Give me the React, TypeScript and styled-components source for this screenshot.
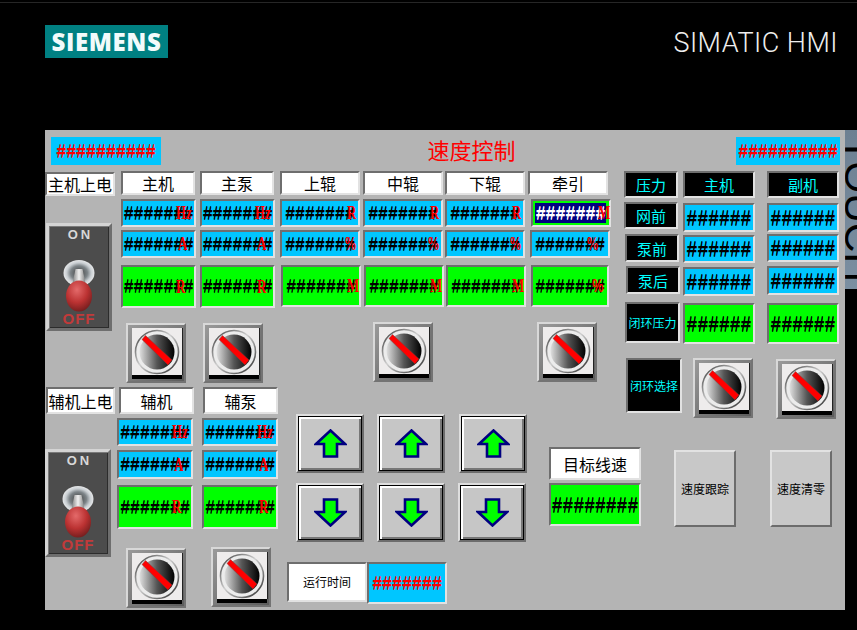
import React, { FC } from "react";
import styled, { createGlobalStyle } from "styled-components";

const Global = createGlobalStyle`
  html, body { margin: 0; padding: 0; background: #000; }
  body { width: 857px; height: 630px; overflow: hidden; }
  * { box-sizing: border-box; }
`;

const CJK = `"Noto Sans CJK SC", "Liberation Sans", sans-serif`;
const HASH = `"Liberation Mono", monospace`;

const Screen = styled.div`
  width: 857px;
  height: 630px;
  background: #000;
  border-top: 2px solid #000;
  box-shadow: inset 0 1px 0 #262626;
  overflow: hidden;
`;

const Header = styled.header`
  display: flex;
  justify-content: space-between;
  align-items: flex-start;
  height: 128px;
  padding: 23px 19px 0 45px;
`;

const Logo = styled.div`
  width: 123px;
  height: 33px;
  background: #008082;
  color: #f2fbfb;
  font: 800 24px/33px "Open Sans", sans-serif;
  letter-spacing: 0.6px;
  text-align: center;
`;

const Product = styled.div`
  color: #eee;
  font: 300 27px/34px Roboto, sans-serif;
  margin-top: 1px;
  letter-spacing: 0.5px;
`;

const Stage = styled.div`
  display: flex;
  height: 480px;
  padding-left: 45px;
`;

const Panel = styled.main`
  width: 800px;
  height: 480px;
  background: #b4b4b4;
  display: flex;
  flex-direction: column;
`;

const Strip = styled.aside`
  width: 12px;
  height: 159px;
  background: linear-gradient(#6d8092, #7b8fa1);
  overflow: hidden;
  position: relative;
`;

const StripText = styled.span`
  position: absolute;
  top: 7px;
  left: -7px;
  writing-mode: vertical-rl;
  color: #000;
  font: 400 41px/41px "Liberation Sans", sans-serif;
`;

const TopBar = styled.div`
  display: flex;
  justify-content: space-between;
  align-items: center;
  height: 41px;
  padding: 7px 5px 6px 6px;
`;

const Title = styled.h1`
  margin: 0 0 4px 46px;
  color: #f00;
  font: 400 22px/28px ${CJK};
`;

const Body = styled.div`
  display: flex;
  flex: 1;
`;

const Col = styled.div<{ $w?: number; $gap?: number; $dx?: number; $dy?: number }>`
  display: flex;
  flex-direction: column;
  gap: ${(p) => p.$gap ?? 0}px;
  ${(p) => (p.$w ? `width: ${p.$w}px; flex: none;` : "")}
  margin-left: ${(p) => p.$dx ?? 0}px;
  margin-top: ${(p) => p.$dy ?? 0}px;
`;

const Row = styled.div<{ $gap?: number; $h?: number; $dx?: number; $dy?: number }>`
  display: flex;
  gap: ${(p) => p.$gap ?? 0}px;
  ${(p) => (p.$h ? `height: ${p.$h}px; flex: none;` : "")}
  margin-left: ${(p) => p.$dx ?? 0}px;
  margin-top: ${(p) => p.$dy ?? 0}px;
`;

const Flat = styled.div<{ $w: number }>`
  width: ${(p) => p.$w}px;
  height: 28px;
  background: #00c6ff;
  display: flex;
  align-items: center;
  justify-content: center;
`;

const Sunken = styled.div<{ $w: number; $h: number; $bg: string; $dx?: number; $dy?: number }>`
  position: relative;
  flex: none;
  width: ${(p) => p.$w}px;
  height: ${(p) => p.$h}px;
  margin-left: ${(p) => p.$dx ?? 0}px;
  margin-top: ${(p) => p.$dy ?? 0}px;
  background: ${(p) => p.$bg};
  border: 2px solid;
  border-color: #6e6e6e #e2e2e2 #e2e2e2 #6e6e6e;
  display: flex;
  align-items: center;
  justify-content: center;
  white-space: nowrap;
  overflow: hidden;
`;

const Label = styled(Sunken)<{ $size?: number; $color?: string }>`
  color: ${(p) => p.$color ?? "#000"};
  font: 400 ${(p) => p.$size ?? 16}px/1 ${CJK};
`;

// the HMI's "no value" marks: thin uprights, heavy bars
const Hashes = styled.span<{ $color?: string; $size?: number }>`
  display: inline-block;
  transform: translateY(1px) scaleY(1.2);
  color: ${(p) => p.$color ?? "#000"};
  font: 400 ${(p) => p.$size ?? 16.6}px/1 ${HASH};
  text-shadow: 0 1px 0 ${(p) => p.$color ?? "#000"};
`;

const Unit = styled.span<{ $at: number; $size?: number; $sans?: boolean }>`
  position: absolute;
  top: 50%;
  left: ${(p) => p.$at}px;
  transform: translateY(-50%) scaleX(0.72);
  transform-origin: left center;
  color: #f00;
  font: 700 ${(p) => p.$size ?? 18}px/1 ${(p) => (p.$sans ? `"Liberation Sans", sans-serif` : `"Liberation Serif", serif`)};
`;

type ReadoutProps = {
  w: number;
  h: number;
  bg: string;
  count?: number;
  unit?: string;
  at?: number;
  dx?: number;
  dy?: number;
  color?: string;
  sans?: boolean;
  size?: number;
};

const Readout: FC<ReadoutProps> = ({ w, h, bg, count = 7, unit, at = 0, dx, dy, color, sans, size }) => (
  <Sunken $w={w} $h={h} $bg={bg} $dx={dx} $dy={dy}>
    <Hashes $color={color} $size={size}>{"#".repeat(count)}</Hashes>
    {unit && <Unit $at={at} $sans={sans}>{unit}</Unit>}
  </Sunken>
);

const BLUE = "#00c6ff";
const GREEN = "#00ff00";

const Selected = styled.div`
  position: relative;
  width: 80px;
  height: 28px;
  margin-left: 3px;
  border: 2px solid;
  border-color: #6e6e6e #e2e2e2 #e2e2e2 #6e6e6e;
  background: #00ff00;
  padding: 2px;
  flex: none;
`;

const SelectedInner = styled.div`
  width: 71px;
  height: 20px;
  background: #000080;
  display: flex;
  align-items: center;
  justify-content: center;
  overflow: visible;
`;

const KnobFrame = styled.div<{ $dx?: number; $dy?: number }>`
  flex: none;
  width: 60px;
  height: 60px;
  margin-left: ${(p) => p.$dx ?? 0}px;
  margin-top: ${(p) => p.$dy ?? 0}px;
  border: 2px solid;
  border-color: #d8d8d8 #737373 #737373 #d8d8d8;
  background: linear-gradient(135deg, #9a9a9a, #5c5c5c);
  padding: 3px 2px 6px 4px;
  display: flex;
`;

const KnobFace = styled.div`
  flex: 1;
  background: #eeecec;
  box-shadow: 0 4px 0 #000, 1px 0 0 #222;
  display: flex;
  align-items: center;
  justify-content: center;
`;

const Knob: FC<{ dx?: number; dy?: number }> = ({ dx, dy }) => (
  <KnobFrame $dx={dx} $dy={dy}>
    <KnobFace>
      <svg width="46" height="46" viewBox="0 0 46 46">
        <defs>
          <linearGradient id="knobRing" x1="0" y1="0" x2="1" y2="1">
            <stop offset="0" stopColor="#333" />
            <stop offset="0.45" stopColor="#d0d0d0" />
            <stop offset="1" stopColor="#222" />
          </linearGradient>
          <linearGradient id="knobCap" x1="0" y1="0" x2="1" y2="0">
            <stop offset="0" stopColor="#e0e0e0" />
            <stop offset="0.5" stopColor="#555" />
            <stop offset="1" stopColor="#000" />
          </linearGradient>
        </defs>
        <circle cx="23" cy="23" r="21.5" fill="#ececec" stroke="url(#knobRing)" strokeWidth="1.6" />
        <circle cx="23" cy="23" r="17.5" fill="url(#knobCap)" />
        <path d="M8 10.5 L11.5 6.5 L38 31 L34 36 Z" fill="#f00" stroke="#7c3a3a" strokeWidth="0.5" />
      </svg>
    </KnobFace>
  </KnobFrame>
);

const Plate = styled.div<{ $dx?: number; $dy?: number }>`
  flex: none;
  width: 66px;
  height: 108px;
  margin-left: ${(p) => p.$dx ?? 0}px;
  margin-top: ${(p) => p.$dy ?? 0}px;
  background: #4c4c4c;
  border: 3px solid;
  border-color: #d4d4d4 #6e6e6e #6e6e6e #d4d4d4;
  box-shadow: inset 1px 1px 0 #7a7a7a, inset -1px -1px 0 #2c2c2c;
  display: flex;
  flex-direction: column;
  align-items: center;
`;

const PlateOn = styled.span`
  color: #d8d8d8;
  font: 700 13px/16px "Liberation Sans", sans-serif;
  letter-spacing: 3px;
  margin: 1px 0 0 3px;
`;

const PlateOff = styled.span`
  color: #c23a3a;
  font: 900 15px/14px "Liberation Sans", sans-serif;
  letter-spacing: 1px;
  margin-top: 0;
`;

const ToggleArt = styled.svg`
  margin-top: 17px;
`;

const Toggle: FC<{ dx?: number; dy?: number }> = ({ dx, dy }) => (
  <Plate $dx={dx} $dy={dy}>
    <PlateOn>ON</PlateOn>
    <ToggleArt width="32" height="52" viewBox="0 0 32 52">
      <defs>
        <radialGradient id="toggleCollar" cx="0.5" cy="0.5" r="0.55">
          <stop offset="0" stopColor="#3c3c3c" />
          <stop offset="0.5" stopColor="#7d8488" />
          <stop offset="0.72" stopColor="#c9ced2" />
          <stop offset="1" stopColor="#f4f4f4" />
        </radialGradient>
        <radialGradient id="toggleBall" cx="0.42" cy="0.3" r="0.75">
          <stop offset="0" stopColor="#e46a6a" />
          <stop offset="0.55" stopColor="#bb3232" />
          <stop offset="1" stopColor="#6e1c1c" />
        </radialGradient>
        <linearGradient id="toggleStem" x1="0" y1="0" x2="1" y2="0">
          <stop offset="0" stopColor="#777" />
          <stop offset="0.5" stopColor="#f0f0f0" />
          <stop offset="1" stopColor="#777" />
        </linearGradient>
      </defs>
      <ellipse cx="16" cy="13" rx="15.5" ry="13" fill="url(#toggleCollar)" />
      <path d="M12.5 9 H19.5 L23 26 H9 Z" fill="url(#toggleStem)" />
      <ellipse cx="16" cy="36" rx="13" ry="15.5" fill="url(#toggleBall)" />
    </ToggleArt>
    <PlateOff>OFF</PlateOff>
  </Plate>
);

const ArrowButton = styled.button<{ $dx?: number }>`
  flex: none;
  width: 68px;
  height: 59px;
  padding: 0;
  margin-left: ${(p) => p.$dx ?? 0}px;
  background: #c6c6c6;
  border: 2px solid;
  border-color: #dedede #6c6c6c #6c6c6c #dedede;
  box-shadow: inset 0 0 0 1px #000, inset 2px 2px 0 1px #fff, inset -2px -2px 0 1px #777;
  display: flex;
  align-items: center;
  justify-content: center;
`;

const Arrow: FC<{ down?: boolean }> = ({ down }) => (
  <svg width="33" height="29" viewBox="0 0 33 29">
    <path
      d={down ? "M10 1.5 H23 V14 H31 L16.5 27.5 L2 14 H10 Z" : "M16.5 1.5 L31 15 H23 V27.5 H10 V15 H2 Z"}
      fill="#00ff00"
      stroke="#000080"
      strokeWidth="2.6"
    />
  </svg>
);

const PushButton = styled.button<{ $dx?: number }>`
  flex: none;
  width: 62px;
  height: 77px;
  padding: 0;
  margin: 36px 0 0 ${(p) => p.$dx ?? 0}px;
  background: #c8c8c8;
  border: 2px solid;
  border-color: #e2e2e2 #6c6c6c #6c6c6c #e2e2e2;
  color: #000;
  font: 400 12px/1 ${CJK};
`;

type DriveProps = {
  name: string;
  w: number;
  dx: number;
  nameDx?: number;
  gaps: number[];
  hs: number[];
  shift?: number;
};

const Drive: FC<DriveProps> = ({ name, w, dx, nameDx = 0, gaps, hs, shift = 0 }) => (
  <Col $w={w + 4} $dx={dx}>
    <Label $w={w} $h={hs[0]} $bg="#fff" $dx={nameDx}>{name}</Label>
    <Readout w={w + 1} h={hs[1]} bg={BLUE} dy={gaps[0]} unit="Hz" at={53} />
    <Readout w={w + 1} h={hs[2]} bg={BLUE} dy={gaps[1]} unit="A" at={55} />
    <Readout w={w + 1} h={hs[3]} bg={GREEN} dy={gaps[2]} unit="R" at={53 + shift} />
  </Col>
);

const Roll: FC<{ name: string; dx: number; lift?: number }> = ({ name, dx, lift = 1 }) => (
  <Col $w={82} $dx={dx}>
    <Label $w={80} $h={24} $bg="#fff">{name}</Label>
    <Readout w={80} h={28} bg={BLUE} dy={4} unit="R" at={65} />
    <Readout w={80} h={28} bg={BLUE} dy={3} unit="%" at={62} />
    <Readout w={80} h={42} bg={GREEN} dy={7} dx={lift} unit="M" at={64} />
  </Col>
);

const Tract: FC<{ dx: number }> = ({ dx }) => (
  <Col $w={82} $dx={dx}>
    <Label $w={80} $h={24} $bg="#fff">牵引</Label>
    <Row $dy={4}>
      <Selected>
        <SelectedInner>
          <Hashes $color="#fff">#######</Hashes>
        </SelectedInner>
        <Unit $at={65}>M</Unit>
      </Selected>
    </Row>
    <Readout w={80} h={28} bg={BLUE} dx={2} dy={3} unit="%" at={54} />
    <Readout w={78} h={42} bg={GREEN} dx={3} dy={7} unit="%" at={59} sans />
  </Col>
);

type CyanProps = { w: number; h: number; size?: number; dx?: number; dy?: number; children: React.ReactNode };

const Cyan: FC<CyanProps> = ({ w, h, size = 15, dx, dy, children }) => (
  <Label $w={w} $h={h} $bg="#000" $color="#00ffff" $size={size} $dx={dx} $dy={dy}>
    {children}
  </Label>
);

const App: FC = () => (
  <>
    <Global />
    <Screen>
      <Header>
        <Logo>SIEMENS</Logo>
        <Product>SIMATIC HMI</Product>
      </Header>
      <Stage>
        <Panel>
          <TopBar>
            <Flat $w={110}><Hashes $color="#f00">##########</Hashes></Flat>
            <Title>速度控制</Title>
            <Flat $w={104}><Hashes $color="#f00">##########</Hashes></Flat>
          </TopBar>
          <Body>
            <Col $w={235}>
              <Row $h={216}>
                <Col $w={76}>
                  <Label $w={70} $h={24} $bg="#fff" $dy={1}>主机上电</Label>
                  <Toggle dx={1} dy={27} />
                </Col>
                <Col>
                  <Row>
                    <Drive name="主机" w={74} dx={0} gaps={[4, 3, 7]} hs={[24, 28, 28, 43]} />
                    <Drive name="主泵" w={74} dx={1} gaps={[4, 3, 7]} hs={[24, 28, 28, 43]} shift={2} />
                  </Row>
                  <Row $dy={15} $dx={5}>
                    <Knob />
                    <Knob dx={17} />
                  </Row>
                </Col>
              </Row>
              <Row>
                <Col $w={72}>
                  <Label $w={69} $h={27} $bg="#fff" $dx={1}>辅机上电</Label>
                  <Toggle dy={35} />
                </Col>
                <Col>
                  <Row>
                    <Drive name="辅机" w={75} dx={0} nameDx={2} gaps={[4, 4, 6]} hs={[27, 28, 29, 44]} />
                    <Drive name="辅泵" w={75} dx={6} nameDx={1} gaps={[4, 4, 6]} hs={[27, 28, 29, 44]} shift={2} />
                  </Row>
                  <Row $dy={19} $dx={9}>
                    <Knob />
                    <Knob dx={25} dy={-1} />
                  </Row>
                </Col>
              </Row>
            </Col>
            <Col>
              <Row $h={243}>
                <Col $w={330}>
                  <Row>
                    <Roll name="上辊" dx={0} />
                    <Roll name="中辊" dx={1} />
                    <Roll name="下辊" dx={0} />
                    <Tract dx={1} />
                  </Row>
                  <Row $dy={15} $dx={93}>
                    <Knob />
                    <Knob dx={104} />
                  </Row>
                </Col>
                <Col $w={60} $dx={14}>
                  <Cyan w={54} h={27}>压力</Cyan>
                  <Cyan w={54} h={27} dy={4}>网前</Cyan>
                  <Cyan w={54} h={28} dx={1} dy={5}>泵前</Cyan>
                  <Cyan w={54} h={28} dx={2} dy={4}>泵后</Cyan>
                  <Cyan w={55} h={41} size={12} dx={1} dy={8}>闭环压力</Cyan>
                  <Cyan w={56} h={55} size={12} dx={2} dy={15}>闭环选择</Cyan>
                </Col>
                <Col $w={84} $dx={-1}>
                  <Cyan w={72} h={27}>主机</Cyan>
                  <Readout w={72} h={29} bg={BLUE} count={6} size={18} dy={5} />
                  <Readout w={72} h={28} bg={BLUE} count={6} size={18} dy={3} />
                  <Readout w={72} h={29} bg={BLUE} count={6} size={18} dy={4} />
                  <Readout w={72} h={41} bg={GREEN} count={6} size={18} dy={7} />
                  <Knob dx={10} dy={14} />
                </Col>
                <Col $w={72}>
                  <Cyan w={72} h={27}>副机</Cyan>
                  <Readout w={72} h={29} bg={BLUE} count={6} size={18} dy={5} />
                  <Readout w={72} h={28} bg={BLUE} count={6} size={18} dy={2} />
                  <Readout w={72} h={29} bg={BLUE} count={6} size={18} dy={4} />
                  <Readout w={72} h={41} bg={GREEN} count={6} size={18} dy={8} />
                  <Knob dx={9} dy={15} />
                </Col>
              </Row>
              <Row>
                <Col $w={253}>
                  <Row $dx={16}>
                    <ArrowButton><Arrow /></ArrowButton>
                    <ArrowButton $dx={13}><Arrow /></ArrowButton>
                    <ArrowButton $dx={14}><Arrow /></ArrowButton>
                  </Row>
                  <Row $dx={16} $dy={10}>
                    <ArrowButton><Arrow down /></ArrowButton>
                    <ArrowButton $dx={13}><Arrow down /></ArrowButton>
                    <ArrowButton $dx={13}><Arrow down /></ArrowButton>
                  </Row>
                  <Row $dx={7} $dy={20}>
                    <Label $w={80} $h={40} $bg="#fff" $size={12}>运行时间</Label>
                    <Readout w={80} h={42} bg={BLUE} color="#f00" />
                  </Row>
                </Col>
                <Col $w={92} $dx={16} $dy={33}>
                  <Label $w={92} $h={33} $bg="#fff">目标线速</Label>
                  <Readout w={92} h={43} bg={GREEN} count={8} size={18} dy={3} />
                </Col>
                <PushButton $dx={33}>速度跟踪</PushButton>
                <PushButton $dx={34}>速度清零</PushButton>
              </Row>
            </Col>
          </Body>
        </Panel>
        <Strip>
          <StripText>TOUCH</StripText>
        </Strip>
      </Stage>
    </Screen>
  </>
);

export default App;
